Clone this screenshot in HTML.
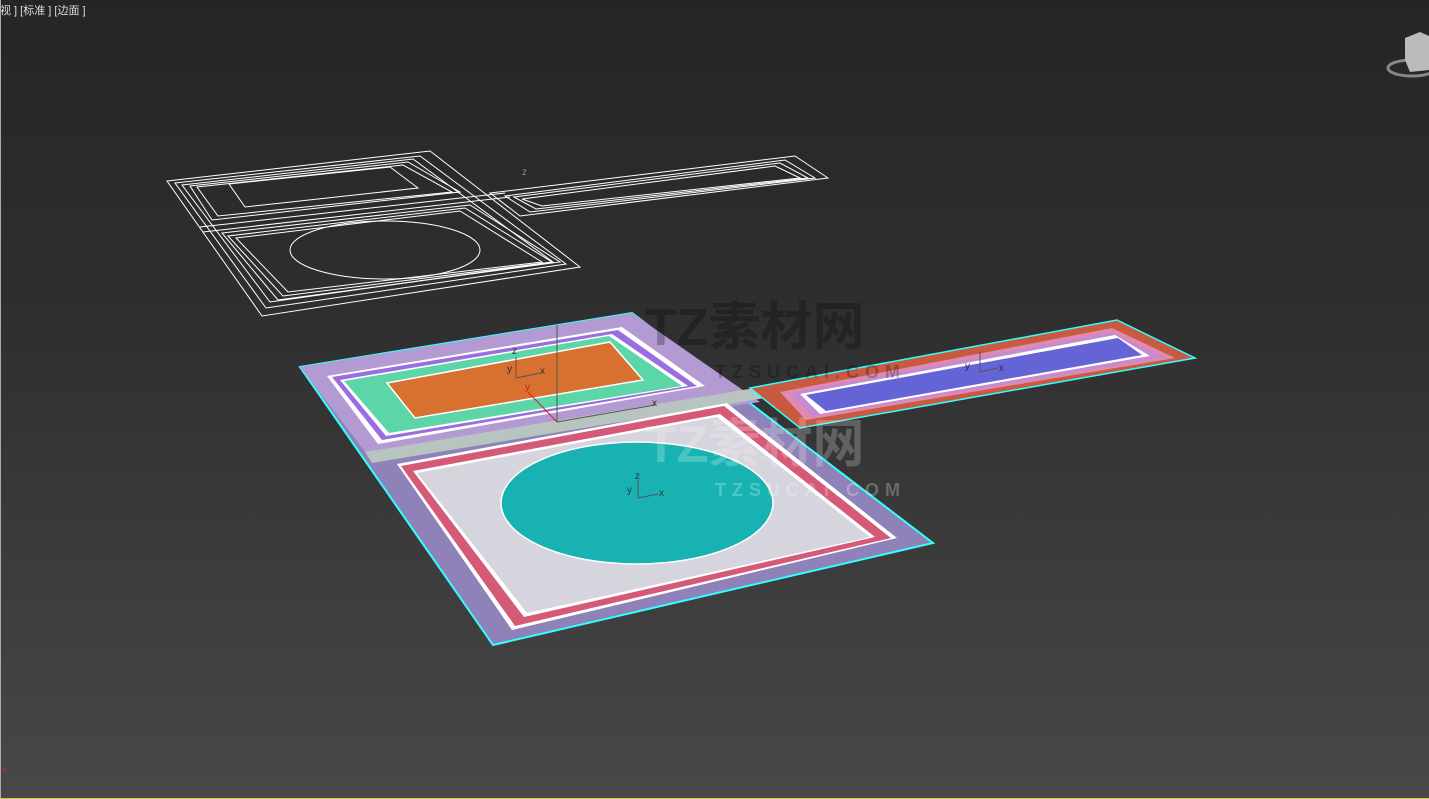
<!DOCTYPE html>
<html><head><meta charset="utf-8"><style>
html,body{margin:0;padding:0;width:1429px;height:799px;overflow:hidden;background:linear-gradient(#252525 0%,#2f2f2f 40%,#484848 100%);font-family:"Liberation Sans","Noto Sans CJK SC",sans-serif}
.lbl{position:absolute;left:0;top:2px;color:#ddd;font-size:11px;white-space:nowrap}
</style></head><body>
<div class="lbl">视 ] [标准 ] [边面 ]</div>
<div style="position:absolute;left:0;top:0;width:1px;height:799px;background:#aaa"></div>
<div style="position:absolute;left:0;bottom:0;width:1429px;height:1px;background:#c8c84a"></div>
<svg width="1429" height="799" style="position:absolute;left:0;top:0">
<!-- wireframe -->
<g fill="none" stroke="#fff" stroke-width="1">
<polygon points="167,181 430,151 580,267 262,316"/>
<polygon points="175,183 420,156 566,264 266,308"/>
<polygon points="182,185 413,159 553,262 270,302"/>
<polygon points="190,186 408,162 460,192 212,220"/>
<polygon points="197,187 403,165 452,192 218,216"/>
<polygon points="229,184 390,167 418,188 245,207"/>
<line x1="200" y1="227" x2="505" y2="193"/>
<line x1="203" y1="232" x2="510" y2="197"/>
<polygon points="222,233 470,205 560,262 278,300"/>
<polygon points="228,236 465,208 552,262 283,296"/>
<polygon points="236,238 460,211 542,262 288,292"/>
<ellipse cx="385" cy="250" rx="95" ry="29"/>
<polygon points="490,193 795,156 828,178 520,216"/>
<polygon points="505,196 785,160 815,178 530,212"/>
<polygon points="514,197 780,163 808,178 536,209"/>
<polygon points="522,199 775,166 800,178 542,206"/>
</g>
<!-- colored plates -->
<polygon points="300,367 632,313 933,543 493,645" fill="#8f82b8" stroke="#3ff" stroke-width="2"/>
<polygon points="300,367 632,313 760,402 370,458" fill="#b39ad2"/>
<polygon points="365,452 755,388 765,398 372,463" fill="#b7c4bf"/>
<polygon points="327,376 622,327 705,386 378,444" fill="#fff"/>
<polygon points="332,377 618,330 697,386 382,440" fill="#9a6ee0"/>
<polygon points="340,380 612,334 688,386 386,436" fill="#fff"/>
<polygon points="344,381 609,336 682,386 389,433" fill="#5cd5a8"/>
<polygon points="387,383 610,342 643,380 415,418" fill="#d87030" stroke="#fff" stroke-width="1.5"/>
<polygon points="397,464 727,403 897,538 512,630" fill="#fff"/>
<polygon points="401,466 724,406 891,538 515,626" fill="#d45a78"/>
<polygon points="413,471 720,414 875,537 524,617" fill="#fff"/>
<polygon points="417,473 717,417 870,537 527,613" fill="#d6d4dc"/>
<ellipse cx="637" cy="503" rx="136" ry="61" fill="#18b2b2" stroke="#fff" stroke-width="1.5"/>
<!-- right strip -->
<polygon points="750,388 1117,320 1195,358 800,428" fill="#c85a42" stroke="#3ff" stroke-width="1.5"/>
<polygon points="780,392 1112,328 1175,358 806,420" fill="#e08ab0"/>
<polygon points="790,393 1110,332 1165,357 812,417" fill="#c58ad0"/>
<polygon points="800,394 1115,335 1150,356 820,414" fill="#fff"/>
<polygon points="806,395 1118,338 1142,355 826,411" fill="#6464d6"/>
<!-- gizmos -->
<g stroke="#555" stroke-width="1" fill="none">
<line x1="557" y1="325" x2="557" y2="422"/><line x1="557" y1="422" x2="655" y2="405"/><line x1="557" y1="422" x2="528" y2="392" stroke="#c22"/>
<line x1="516" y1="357" x2="516" y2="378"/><line x1="516" y1="378" x2="540" y2="373"/>
<line x1="638" y1="480" x2="638" y2="498"/><line x1="638" y1="498" x2="658" y2="494"/>
<line x1="980" y1="352" x2="980" y2="372"/><line x1="980" y1="372" x2="998" y2="368"/>
</g>
<g fill="#333" font-size="10" font-family="Liberation Sans">
<text x="512" y="354">z</text><text x="507" y="372">y</text><text x="540" y="374">x</text>
<text x="525" y="390" fill="#c22">y</text><text x="652" y="406">x</text>
<text x="635" y="479">z</text><text x="627" y="493">y</text><text x="659" y="496">x</text>
<text x="965" y="369">y</text><text x="999" y="371">x</text>
<text x="522" y="175" fill="#888">z</text>
</g>
<!-- watermark -->
<g font-family="Liberation Sans,'Noto Sans CJK SC',sans-serif" font-weight="bold">
<text x="645" y="345" font-size="52" fill="#000" fill-opacity="0.25">TZ素材网</text>
<text x="715" y="378" font-size="18" fill="#000" fill-opacity="0.25" letter-spacing="6">TZSUCAI.COM</text>
<text x="645" y="462" font-size="52" fill="#fff" fill-opacity="0.22">TZ素材网</text>
<text x="715" y="496" font-size="18" fill="#fff" fill-opacity="0.25" letter-spacing="6">TZSUCAI.COM</text>
</g>
<!-- nav cube -->
<ellipse cx="1412" cy="68" rx="24" ry="8" fill="none" stroke="#888" stroke-width="3"/>
<polygon points="1405,38 1420,32 1429,36 1429,70 1410,72 1405,60" fill="#bbb"/>
<text x="2" y="772" font-size="9" fill="#c22" font-family="Liberation Sans">x</text>
</svg>
</body></html>
